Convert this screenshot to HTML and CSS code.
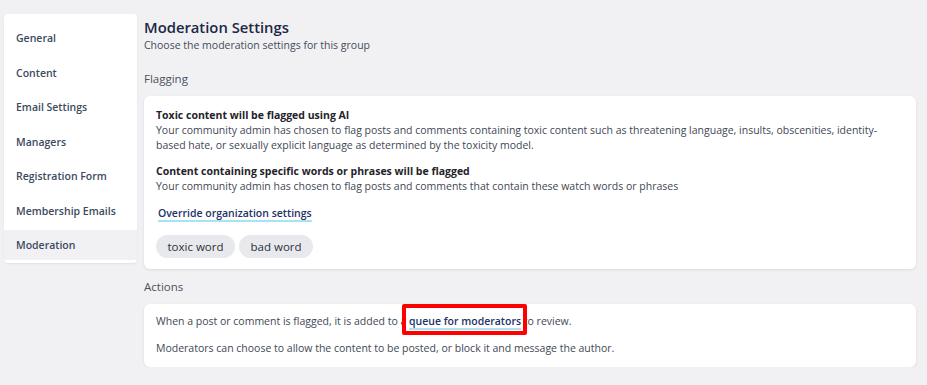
FILE: index.html
```html
<!DOCTYPE html>
<html lang="en">
<head>
    <meta charset="UTF-8">
    <meta name="viewport" content="width=device-width, initial-scale=1.0">
    <title>Moderation Settings</title>
    <link rel="stylesheet" href="styles.css">
</head>
<body>
    <div class="page">
        <ul class="side">
            <li>General</li>
            <li>Content</li>
            <li>Email Settings</li>
            <li>Managers</li>
            <li>Registration Form</li>
            <li>Membership Emails</li>
            <li class="active">Moderation</li>
        </ul>
        <div class="main">
            <h1>Moderation Settings</h1>
            <p class="sub">Choose the moderation settings for this group</p>

            <h2>Flagging</h2>
            <div class="card flag">
                <div class="block">
                    <b>Toxic content will be flagged using AI</b>
                    <p>Your community admin has chosen to flag posts and comments containing toxic content such as threatening language, insults, obscenities, identity-based hate, or sexually explicit language as determined by the toxicity model.</p>
                </div>
                <div class="block">
                    <b>Content containing specific words or phrases will be flagged</b>
                    <p>Your community admin has chosen to flag posts and comments that contain these watch words or phrases</p>
                </div>
                <a class="link override" href="#">Override organization settings</a>
                <div class="chips">
                    <span class="chip">toxic word</span>
                    <span class="chip">bad word</span>
                </div>
            </div>

            <h2 class="next">Actions</h2>
            <div class="card actions">
                <p>When a post or comment is flagged, it is added to a <a class="link marked" href="#">queue for moderators</a> to review.</p>
                <p>Moderators can choose to allow the content to be posted, or block it and message the author.</p>
            </div>
        </div>
    </div>
</body>
</html>
```

FILE: styles.css
```css
* {
    margin: 0;
    padding: 0;
    box-sizing: border-box;
}
ul,li{
    list-style: none;
}
body{
    background-color: #f1f1f4;
    font-family: "Open Sans", "Liberation Sans", sans-serif;
    font-size: 10.5px;
    color: #414855;
}
.page{
    display: flex;
    align-items: flex-start;
    gap: 7px;
    padding: 14px 11px 0 4px;
}
.side{
    width: 133px;
    flex-shrink: 0;
    background-color: #fff;
    border-radius: 4px;
    padding: 9px 0 3px;
    display: flex;
    flex-direction: column;
    gap: 4.5px;
    box-shadow: 0 1px 2px rgba(30, 40, 60, .08);
}
.side > li{
    height: 30px;
    display: flex;
    align-items: center;
    padding-left: 12px;
    font-weight: 600;
    color: #3c4a5e;
}
.side > li.active{
    background-color: #f1f1f4;
}
.main{
    flex: 1;
}
h1{
    font-size: 14.8px;
    font-weight: 600;
    color: #1b2744;
    line-height: 18px;
    margin-top: 4px;
}
.sub{
    line-height: 15px;
    margin-top: 2px;
    color: #444c58;
}
h2{
    font-size: 11.5px;
    font-weight: 400;
    color: #4a515c;
    line-height: 15px;
    margin: 18px 0 10px;
}
h2.next{
    margin-top: 10px;
}
.card{
    background-color: #fff;
    border-radius: 6px;
    box-shadow: 0 1px 3px rgba(30, 40, 60, .1);
}
.flag{
    padding: 12px 12px 11px;
}
.block{
    line-height: 15px;
    margin-bottom: 11px;
}
.block b{
    display: block;
    font-weight: 700;
    color: #1f2329;
}
.link{
    color: #1d3168;
    font-weight: 600;
    text-decoration: none;
    border-bottom: 2px solid #a8e2f4;
}
.override{
    display: inline-block;
    line-height: 14px;
    margin: 1px 0 0 2px;
}
.chips{
    display: flex;
    gap: 4px;
    margin-top: 13px;
}
.chip{
    background-color: #e8e9ed;
    border-radius: 12px;
    height: 23px;
    padding: 0 11.5px;
    font-size: 11.5px;
    line-height: 23px;
    color: #2b313a;
}
.actions{
    padding: 10px 12px 11px;
    line-height: 15px;
}
.actions p + p{
    margin-top: 12px;
}
.marked{
    position: relative;
}
.marked::after{
    content: "";
    position: absolute;
    left: -7px;
    right: -6px;
    top: -10px;
    bottom: -7px;
    border: 4px solid #ff0000;
    border-radius: 2px;
}
```
